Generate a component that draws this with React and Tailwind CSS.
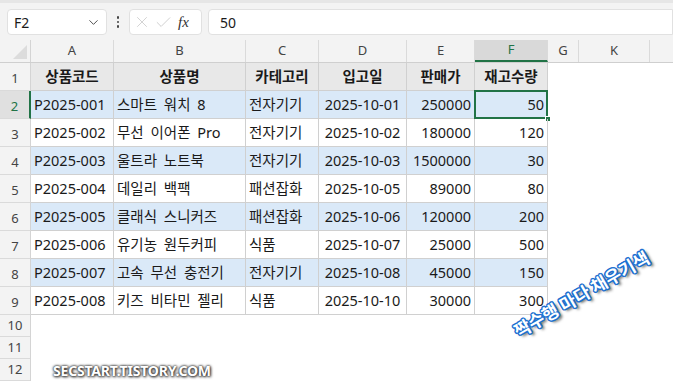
import { ChevronDown, X, Check } from "lucide-react";

const cols = [
  { name: "A", w: "w-[83px]" },
  { name: "B", w: "w-[132px]" },
  { name: "C", w: "w-[73px]" },
  { name: "D", w: "w-[88px]" },
  { name: "E", w: "w-[68px]" },
  { name: "F", w: "w-[73px]" },
  { name: "G", w: "w-[31px]" },
  { name: "K", w: "w-[71px]" },
];

const rows = [
  ["P2025-001", "스마트 워치 8", "전자기기", "2025-10-01", "250000", "50"],
  ["P2025-002", "무선 이어폰 Pro", "전자기기", "2025-10-02", "180000", "120"],
  ["P2025-003", "울트라 노트북", "전자기기", "2025-10-03", "1500000", "30"],
  ["P2025-004", "데일리 백팩", "패션잡화", "2025-10-05", "89000", "80"],
  ["P2025-005", "클래식 스니커즈", "패션잡화", "2025-10-06", "120000", "200"],
  ["P2025-006", "유기농 원두커피", "식품", "2025-10-07", "25000", "500"],
  ["P2025-007", "고속 무선 충전기", "전자기기", "2025-10-08", "45000", "150"],
  ["P2025-008", "키즈 비타민 젤리", "식품", "2025-10-10", "30000", "300"],
];

const heads = ["상품코드", "상품명", "카테고리", "입고일", "판매가", "재고수량"];

function App() {
  return (
    <div
      className="w-[673px] h-[386px] overflow-hidden bg-white relative text-[#1a1a1a]"
      style={{ fontFamily: '"Noto Sans", "Noto Sans CJK KR", sans-serif' }}
    >
      {/* formula bar */}
      <div className="h-[40px] bg-[#f3f3f3] border-t-[3px] border-[#e6e6e6] flex items-center pl-[7px] gap-[6px] pt-[1px]">
        <div className="w-[100px] h-[26px] bg-white rounded-[4px] border border-[#e1e1e1] flex items-center justify-between pl-[6px] pr-[5px] text-[14px]">
          <span>F2</span>
          <ChevronDown size={15} strokeWidth={1.5} className="text-[#444]" />
        </div>
        <div className="w-[10px] flex flex-col items-center gap-[2px]">
          <span className="w-[2.5px] h-[2.5px] rounded-full bg-[#444]" />
          <span className="w-[2.5px] h-[2.5px] rounded-full bg-[#444]" />
          <span className="w-[2.5px] h-[2.5px] rounded-full bg-[#444]" />
        </div>
        <div className="w-[73px] h-[26px] bg-white rounded-[4px] border border-[#e1e1e1] flex items-center pl-[3px] gap-[3px]">
          <X size={18} strokeWidth={1} className="text-[#c4c4c4]" />
          <Check size={19} strokeWidth={1} className="text-[#c4c4c4]" />
          <span
            className="italic text-[15px] text-[#333] ml-[2px]"
            style={{ fontFamily: '"Liberation Serif", serif' }}
          >
            fx
          </span>
        </div>
        <div className="flex-1 h-[26px] bg-white rounded-l-[4px] border border-[#e1e1e1] flex items-center pl-[11px] text-[14px]">
          50
        </div>
      </div>

      {/* column headers */}
      <div className="flex h-[23px] bg-[#f3f3f3] border-b border-[#cfcfcf] text-[13px] text-[#444]">
        <div className="w-[31px] relative border-r border-[#d4d4d4]">
          <div className="absolute right-[3px] bottom-[3px] w-0 h-0 border-l-[14px] border-l-transparent border-b-[14px] border-b-[#dcdcdc]" />
        </div>
        {cols.map((c) => (
          <div
            key={c.name}
            className={`${c.w} flex items-center justify-center border-r border-[#dadada] ${
              c.name === "F" ? "bg-[#d9d9d9] text-[#217346] border-b-2 border-b-[#217346]" : ""
            }`}
          >
            {c.name}
          </div>
        ))}
        <div className="flex-1" />
      </div>

      {/* body */}
      <div className="flex">
        {/* row headers */}
        <div className="w-[31px] bg-[#f3f3f3] border-r border-[#d4d4d4] text-[13px] text-[#444] flex flex-col">
          {[1, 2, 3, 4, 5, 6, 7, 8, 9].map((n) => (
            <div
              key={n}
              className={`h-[28px] flex items-end justify-center pb-[2px] border-b border-[#dadada] ${
                n === 2 ? "bg-[#e0e0e0] text-[#217346] border-r-2 border-r-[#217346] -mr-px" : ""
              }`}
            >
              {n}
            </div>
          ))}
          {[10, 11, 12].map((n) => (
            <div key={n} className="h-[22px] flex items-center justify-center border-b border-[#dadada]">
              {n}
            </div>
          ))}
        </div>

        {/* table */}
        <div className="flex flex-col text-[14.5px]">
          <div className="flex h-[28px] bg-[#e8e8e8] font-bold">
            {heads.map((h, i) => (
              <div
                key={h}
                className={`${cols[i].w} flex items-center justify-center border-r border-b border-[#d0d0d0]`}
              >
                {h}
              </div>
            ))}
          </div>
          {rows.map((r, ri) => (
            <div key={ri} className={`flex h-[28px] ${ri % 2 === 0 ? "bg-[#dae9f8]" : "bg-white"}`}>
              {r.map((v, i) => (
                <div
                  key={i}
                  className={`${cols[i].w} relative flex items-center border-r border-b border-[#d0d0d0] px-[3px] whitespace-nowrap [word-spacing:3px] ${
                    i >= 4 ? "justify-end" : i === 3 ? "justify-center" : "justify-start"
                  }`}
                >
                  {v}
                  {ri === 0 && i === 5 && (
                    <>
                      <div className="absolute -left-px -top-px -right-px -bottom-px border-2 border-[#217346]" />
                      <div className="absolute -right-[4px] -bottom-[4px] w-[6px] h-[6px] bg-[#217346] border border-white" />
                    </>
                  )}
                </div>
              ))}
            </div>
          ))}
        </div>
      </div>

      {/* watermarks */}
      <div
        className="absolute left-[53px] top-[360px] text-[14px] font-bold text-white tracking-[-0.2px]"
        style={{ textShadow: "0 0 3px #333, 0 0 2px #333, 1px 1px 3px #444" }}
      >
        SECSTART.TISTORY.COM
      </div>
      <div
        className="absolute left-[505px] top-[281px] text-[17.5px] font-bold text-white -rotate-[30deg] whitespace-nowrap"
        style={{
          fontFamily: '"Noto Sans CJK KR", sans-serif',
          textShadow:
            "1.5px 0 #1b6fd1, -1.5px 0 #1b6fd1, 0 1.5px #1b6fd1, 0 -1.5px #1b6fd1, 1px 1px #1b6fd1, -1px -1px #1b6fd1, 1px -1px #1b6fd1, -1px 1px #1b6fd1, 2px 3px 3px #444",
        }}
      >
        짝수행 마다 채우기색
      </div>
    </div>
  );
}

export default App;
